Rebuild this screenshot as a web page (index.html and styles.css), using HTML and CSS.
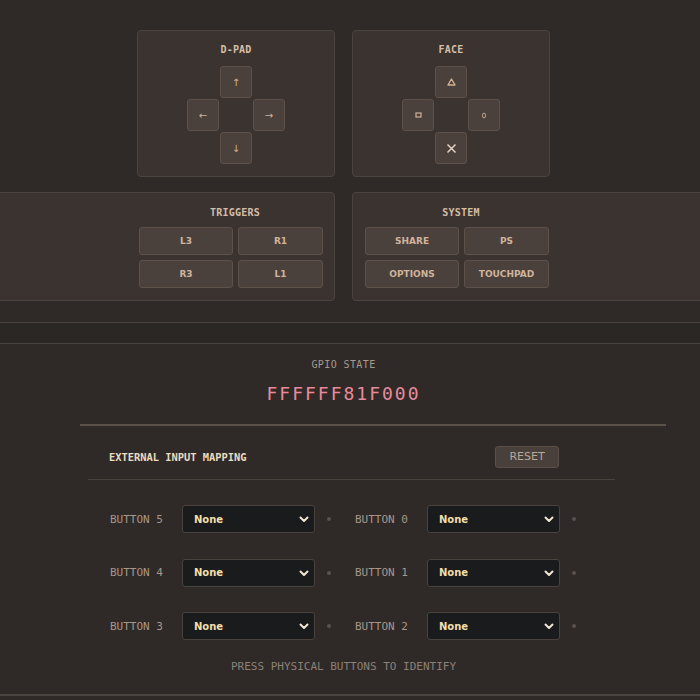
FILE: index.html
```html
<!DOCTYPE html>
<html lang="en">

<head>
    <meta charset="UTF-8">
    <meta name="viewport" content="width=device-width, initial-scale=1.0">
    <title>Controller input tester</title>
    <link rel="stylesheet" href="styles.css">
</head>

<body>
    <div class="page">
        <div class="pad-row">
            <section class="card pad-card">
                <h2 class="card-title">D-PAD</h2>
                <div class="cross">
                    <button class="key up">↑</button>
                    <button class="key left">←</button>
                    <button class="key right">→</button>
                    <button class="key down">↓</button>
                </div>
            </section>
            <section class="card pad-card">
                <h2 class="card-title">FACE</h2>
                <div class="cross">
                    <button class="key up">
                        <svg width="9" height="8" viewBox="0 0 9 8"><path d="M4.5 1 L8 7 H1 Z" fill="none" stroke="currentColor" stroke-width="1.4" stroke-linejoin="round"/></svg>
                    </button>
                    <button class="key left">
                        <svg width="7" height="6" viewBox="0 0 7 6"><rect x="1" y="1" width="5" height="4" fill="none" stroke="currentColor" stroke-width="1.2"/></svg>
                    </button>
                    <button class="key right">
                        <svg width="6" height="7" viewBox="0 0 6 7"><ellipse cx="3" cy="3.5" rx="1.6" ry="2.4" fill="none" stroke="currentColor" stroke-width="0.9"/></svg>
                    </button>
                    <button class="key down cross-key">
                        <svg width="11" height="11" viewBox="0 0 11 11"><path d="M1.5 1.5 L9.5 9.5 M9.5 1.5 L1.5 9.5" stroke="currentColor" stroke-width="1.5"/></svg>
                    </button>
                </div>
            </section>
        </div>

        <div class="btn-row">
            <section class="card group-card group-left">
                <div class="group">
                    <h2 class="card-title group-title">TRIGGERS</h2>
                    <div class="group-grid">
                        <button class="pill">L3</button>
                        <button class="pill">R1</button>
                        <button class="pill">R3</button>
                        <button class="pill">L1</button>
                    </div>
                </div>
            </section>
            <section class="card group-card group-right">
                <div class="group">
                    <h2 class="card-title group-title">SYSTEM</h2>
                    <div class="group-grid">
                        <button class="pill">SHARE</button>
                        <button class="pill">PS</button>
                        <button class="pill">OPTIONS</button>
                        <button class="pill">TOUCHPAD</button>
                    </div>
                </div>
            </section>
        </div>

        <div class="divider"></div>

        <section class="gpio">
            <div class="gpio-label">GPIO STATE</div>
            <div class="gpio-value">FFFFFF81F000</div>

            <div class="mapping">
                <div class="mapping-head">
                    <h3>EXTERNAL INPUT MAPPING</h3>
                    <button class="reset">RESET</button>
                </div>
                <div class="mapping-grid" id="mapping-grid"></div>
            </div>

            <p class="hint">PRESS PHYSICAL BUTTONS TO IDENTIFY</p>
        </section>

        <div class="footer-line"></div>
    </div>

    <script>
        const grid = document.getElementById('mapping-grid');
        // two columns: left column 5,4,3 and right column 0,1,2
        const order = [5, 0, 4, 1, 3, 2];

        order.forEach(function (n) {
            const cell = document.createElement('div');
            cell.className = 'map-cell';
            cell.innerHTML = `
                <span class="map-label">BUTTON ${n}</span>
                <span class="select-wrap">
                    <select class="map-select">
                        <option>None</option>
                        <option>Cross</option>
                        <option>Circle</option>
                        <option>Square</option>
                        <option>Triangle</option>
                    </select>
                    <svg class="chevron" width="10" height="7" viewBox="0 0 10 7"><path d="M1.5 1.5 L5 5 L8.5 1.5" fill="none" stroke="currentColor" stroke-width="2" stroke-linecap="round" stroke-linejoin="round"/></svg>
                </span>
                <span class="map-dot"></span>
            `;
            grid.appendChild(cell);
        });
    </script>
</body>

</html>
```

FILE: styles.css
```css
* {
    margin: 0;
    padding: 0;
    box-sizing: border-box;
}

body {
    background-color: #2f2a28;
    color: #d2b8a0;
    font-family: "DejaVu Sans", sans-serif;
    overflow: hidden;
}

.page {
    width: 687px;
    padding-top: 30px;
}

/* controller cards */
.card {
    flex-shrink: 0;
    background-color: #3a3330;
    border: 1px solid #4b433e;
    border-radius: 4px;
}

.card-title {
    font-family: "DejaVu Sans Mono", monospace;
    font-size: 10px;
    font-weight: bold;
    line-height: 14px;
    color: #d6bea6;
    text-align: center;
    letter-spacing: 0.2px;
}

.pad-row,
.btn-row {
    display: flex;
    justify-content: center;
    gap: 17px;
}

.pad-card {
    width: 198px;
    height: 147px;
    padding: 12px 12px 0;
}

.pad-card .card-title {
    margin-bottom: 9px;
}

.cross {
    display: grid;
    grid-template-columns: repeat(3, 32px);
    grid-template-rows: repeat(3, 32px);
    gap: 1px;
    justify-content: center;
}

.key {
    background-color: #4b413c;
    border: 1px solid #5d514a;
    border-radius: 3px;
    color: #cfb195;
    font-family: "DejaVu Sans", sans-serif;
    font-size: 10px;
    display: flex;
    align-items: center;
    justify-content: center;
}

.key.up { grid-column: 2; grid-row: 1; }
.key.left { grid-column: 1; grid-row: 2; }
.key.right { grid-column: 3; grid-row: 2; }
.key.down { grid-column: 2; grid-row: 3; }

.key svg {
    display: block;
}

.cross-key {
    color: #e6d4c2;
}

.btn-row {
    margin-top: 15px;
}

.group-card {
    width: 420px;
    height: 109px;
    padding-top: 13px;
    display: flex;
}

.group-left {
    justify-content: flex-end;
    padding-right: 11px;
}

.group-right {
    justify-content: flex-start;
    padding-left: 12px;
}

.group {
    width: 184px;
}

.group-title {
    padding-left: 8px;
    margin-bottom: 7px;
}

.group-grid {
    display: grid;
    grid-template-columns: 94px 85px;
    grid-auto-rows: 28px;
    gap: 5px;
}

.pill {
    background-color: #4b413c;
    border: 1px solid #5d514a;
    border-radius: 3px;
    color: #cfb39b;
    font-family: "DejaVu Sans", sans-serif;
    font-size: 9px;
    font-weight: bold;
}

/* divider band */
.divider {
    margin-top: 21px;
    width: 700px;
    height: 22px;
    background-color: #2b2725;
    border-top: 1px solid #47413d;
    border-bottom: 1px solid #4a4440;
}

/* gpio state */
.gpio {
    text-align: center;
}

.gpio-label {
    margin-top: 14px;
    font-family: "DejaVu Sans Mono", monospace;
    font-size: 10px;
    line-height: 14px;
    letter-spacing: 0.4px;
    color: #a8998c;
}

.gpio-value {
    margin-top: 11px;
    font-family: "DejaVu Sans Mono", monospace;
    font-size: 18px;
    line-height: 22px;
    letter-spacing: 2px;
    color: #e98a9b;
}

.mapping {
    margin: 19px 0 0 80px;
    width: 586px;
    border-top: 2px solid #5a5149;
    text-align: left;
}

.mapping-head {
    width: 527px;
    height: 54px;
    margin-left: 8px;
    padding: 8px 56px 0 21px;
    border-bottom: 1px solid #4a423d;
    display: flex;
    align-items: center;
    justify-content: space-between;
}

.mapping-head h3 {
    font-family: "DejaVu Sans Mono", monospace;
    font-size: 10.4px;
    font-weight: bold;
    color: #eadcc0;
}

.reset {
    width: 64px;
    height: 22px;
    background-color: #4a403b;
    border: 1px solid #5a4f49;
    border-radius: 3px;
    color: #b9a999;
    font-family: "DejaVu Sans", sans-serif;
    font-size: 11px;
}

.mapping-grid {
    margin: 25px 0 0 30px;
    display: grid;
    grid-template-columns: repeat(2, max-content);
    column-gap: 24px;
    row-gap: 25.5px;
}

.map-cell {
    display: flex;
    align-items: center;
    gap: 12px;
    height: 28px;
}

.map-label {
    width: 60px;
    font-family: "DejaVu Sans Mono", monospace;
    font-size: 11px;
    color: #a8968a;
}

.select-wrap {
    position: relative;
    display: block;
}

.map-select {
    appearance: none;
    -webkit-appearance: none;
    display: block;
    width: 133px;
    height: 28px;
    padding: 0 11px;
    background-color: #1a1b1d;
    border: 1px solid #4a423d;
    border-radius: 3px;
    color: #f2dfaa;
    font-family: "DejaVu Sans", sans-serif;
    font-size: 10px;
    font-weight: bold;
}

.chevron {
    position: absolute;
    right: 6px;
    top: 11px;
    color: #f1e6d2;
    pointer-events: none;
}

.map-dot {
    width: 4px;
    height: 4px;
    border-radius: 50%;
    background-color: #5c514b;
}

.hint {
    margin-top: 20px;
    font-family: "DejaVu Sans Mono", monospace;
    font-size: 11px;
    line-height: 14px;
    color: #8c8077;
}

.footer-line {
    margin-top: 20px;
    width: 700px;
    height: 2px;
    background-color: #4a4440;
}
```
